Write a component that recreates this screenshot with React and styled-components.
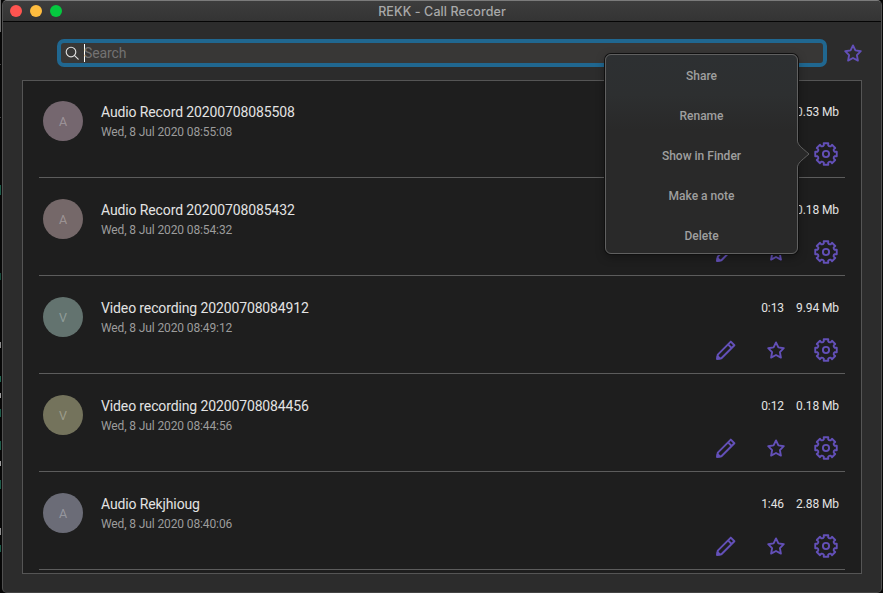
import React from "react";
import styled, { createGlobalStyle } from "styled-components";

const PURPLE = "#6350b8";

const GlobalStyle = createGlobalStyle`
  * { box-sizing: border-box; }
  html, body { margin: 0; height: 100%; background: #050505; overflow: hidden; }
  body { font-family: Roboto, "Liberation Sans", sans-serif; }
`;

// Slivers of another window's text that show past the left edge: [top, bottom, colour].
const slivers = [
  [0, 32, "#6f6f6f"],
  [64, 65, "#444"],
  [117, 118, "#444"],
  [185, 195, "#1c5c49"],
  [273, 280, "#154a3a"],
  [342, 348, "#8f8f8f"],
  [376, 382, "#1f6650"],
  [393, 398, "#a0a0a0"],
  [409, 417, "#1c5c49"],
  [441, 450, "#1c5c49"],
  [461, 466, "#a0a0a0"],
  [480, 489, "#1c5c49"],
  [528, 535, "#8f8f8f"],
  [545, 552, "#1c5c49"],
];

const sliverStops = slivers
  .map(([top, bottom, color]) => `transparent ${top}px, ${color} ${top}px ${bottom}px, transparent ${bottom}px`)
  .join(", ");

const Desktop = styled.div`
  width: 883px;
  height: 593px;
  padding: 0 1px 0 2px;
  background: linear-gradient(${sliverStops}) 0 0 / 1px 100% no-repeat, #060606;
`;

const Window = styled.main`
  display: flex;
  flex-direction: column;
  width: 880px;
  height: 593px;
  border: 1px solid #505050;
  border-top-color: #7b7b7b;
  border-bottom-color: #444;
  border-radius: 5px;
  background: #2c2c2c;
  box-shadow: 0 0 0 1px #080808;
`;

const TitleBar = styled.header`
  display: grid;
  grid-template-columns: 100px 1fr 100px;
  align-items: center;
  flex: none;
  height: 21px;
  border-bottom: 1px solid #050505;
  border-radius: 4px 4px 0 0;
  background: linear-gradient(#3d3d3d, #343434);
`;

const Lights = styled.div`
  display: flex;
  gap: 8px;
  padding-left: 7px;
`;

const Light = styled.span`
  width: 12px;
  height: 12px;
  border-radius: 50%;
  background: ${(p) => p.$color};
`;

const Title = styled.h1`
  margin: 0;
  padding-top: 2px;
  color: #a9a9a9;
  font: 500 12.5px/18px Inter, sans-serif;
  letter-spacing: 0.1px;
  text-align: center;
`;

const Toolbar = styled.div`
  display: flex;
  align-items: center;
  flex: none;
  height: 58px;
  padding: 4px 14px 0 54px;
`;

const SearchField = styled.label`
  display: flex;
  align-items: center;
  flex: none;
  width: 770px;
  height: 28px;
  margin-right: 15px;
  padding-left: 4px;
  border: 4px solid #206790;
  border-radius: 7px;
  background: #383736;
`;

const Caret = styled.span`
  width: 1px;
  height: 18px;
  margin-left: 5px;
  background: #fff;
`;

const Placeholder = styled.span`
  margin-left: -1px;
  color: #737272;
  font-size: 14px;
  letter-spacing: -0.1px;
  line-height: 20px;
`;

const List = styled.section`
  width: 840px;
  height: 494px;
  margin-left: 19px;
  padding: 0 16px;
  border: 1px solid #555;
  background: #1e1e1e;
`;

const Row = styled.article`
  display: grid;
  grid-template-columns: 58px 1fr auto;
  height: ${(p) => (p.$first ? 97 : 98)}px;
  padding: ${(p) => (p.$first ? 20 : 21)}px 7px 0 4px;
  border-bottom: 1px solid #5c5c5c;
`;

const Avatar = styled.div`
  width: 40px;
  height: 40px;
  border-radius: 50%;
  background: ${(p) => p.$color};
  color: rgba(255, 255, 255, 0.3);
  font-size: 12.5px;
  line-height: 42px;
  text-align: center;
`;

const Name = styled.h2`
  margin: 1px 0 0;
  color: #e3e3e3;
  font-size: 14px;
  font-weight: 400;
  letter-spacing: -0.125px;
  line-height: 20px;
`;

const Stamp = styled.p`
  margin: 0;
  color: #9c9c9c;
  font-size: 12px;
  letter-spacing: -0.12px;
  line-height: 20px;
`;

const Side = styled.div`
  display: flex;
  flex-direction: column;
  align-items: flex-end;
`;

const Facts = styled.div`
  display: flex;
  gap: 12px;
  margin: 1px -1px 0 0;
  color: #e3e3e3;
  font-size: 12px;
  letter-spacing: -0.08px;
  line-height: 20px;
`;

const Actions = styled.div`
  display: flex;
  align-items: center;
  gap: 28px;
  height: 24px;
  margin-top: 20px;
`;

const IconButton = styled.button`
  display: flex;
  padding: 0;
  border: 0;
  background: none;
  color: ${PURPLE};
`;

const ToolbarButton = styled(IconButton)`
  margin-bottom: 1px;
`;

const StarButton = styled(IconButton)`
  margin-right: -1px;
`;

const Menu = styled.nav`
  position: absolute;
  top: 54px;
  left: 605px;
  width: 193px;
  height: 200px;
  padding-top: 1px;
  border: 1px solid #606060;
  border-radius: 6px;
  background: linear-gradient(#2d3032 0, #2d2f30 40px, #292929 75px, #292929);
  box-shadow: 0 0 0 1px #101010, 0 3px 10px rgba(0, 0, 0, 0.35);
`;

const MenuItem = styled.div`
  height: 40px;
  color: #9f9f9f;
  font-size: 12px;
  font-weight: 500;
  line-height: 40px;
  text-align: center;
`;

const Pointer = styled.svg`
  position: absolute;
  top: 85px;
  left: 190px;
  width: 14px;
  height: 28px;
`;

const point = (angle, radius) => {
  const a = (angle * Math.PI) / 180;
  return `${(12 + radius * Math.sin(a)).toFixed(2)} ${(12 - radius * Math.cos(a)).toFixed(2)}`;
};

const gearPath =
  Array.from({ length: 8 }, (_, i) => {
    const a = i * 45;
    return `${i ? "L" : "M"}${point(a - 12, 11)}L${point(a + 12, 11)}L${point(a + 14, 9)}Q${point(a + 22.5, 7.9)} ${point(a + 31, 9)}`;
  }).join("") + "Z";

const Gear = () => (
  <svg width="24" height="24" viewBox="0 0 24 24" fill="none" stroke="currentColor" strokeWidth="1.9" strokeLinejoin="round">
    <path d={gearPath} />
    <circle cx="12" cy="12" r="3.1" />
  </svg>
);

const Star = () => (
  <svg width="22" height="22" viewBox="0 0 22 22" fill="none" stroke="currentColor" strokeWidth="1.9" strokeLinejoin="round">
    <path d="M11 3.4 13.4 8.4 18.8 9.2 14.9 13.1 15.9 18.6 11 16 6.1 18.6 7.1 13.1 3.2 9.2 8.6 8.4Z" />
  </svg>
);

const Pencil = () => (
  <svg width="22" height="22" viewBox="0 0 22 22" fill="none" stroke="currentColor" strokeWidth="1.95" strokeLinejoin="round">
    <path d="M2.2 19.9 2.8 15.6 15.8 2.6 19.4 6.2 6.4 19.2ZM13 5.4 16.6 9" />
    <path d="M2.2 19.9 2.6 17.2 4.9 19.5Z" fill="currentColor" />
  </svg>
);

const Magnifier = () => (
  <svg width="14" height="14" viewBox="0 0 14 14" fill="none" stroke="#dedede" strokeWidth="1.15" strokeLinecap="round">
    <circle cx="6" cy="6" r="4.8" />
    <path d="m9.6 9.6 3.6 3.6" />
  </svg>
);

const recordings = [
  { name: "Audio Record 20200708085508", stamp: "Wed, 8 Jul 2020 08:55:08", color: "#75676f", time: "", size: "0.53 Mb" },
  { name: "Audio Record 20200708085432", stamp: "Wed, 8 Jul 2020 08:54:32", color: "#756869", time: "", size: "0.18 Mb" },
  { name: "Video recording 20200708084912", stamp: "Wed, 8 Jul 2020 08:49:12", color: "#63736f", time: "0:13", size: "9.94 Mb" },
  { name: "Video recording 20200708084456", stamp: "Wed, 8 Jul 2020 08:44:56", color: "#74735c", time: "0:12", size: "0.18 Mb" },
  { name: "Audio Rekjhioug", stamp: "Wed, 8 Jul 2020 08:40:06", color: "#6b6c77", time: "1:46", size: "2.88 Mb" },
];

const menuItems = ["Share", "Rename", "Show in Finder", "Make a note", "Delete"];

export default function App() {
  return (
    <Desktop>
      <GlobalStyle />
      <Window>
        <TitleBar>
          <Lights>
            <Light $color="#ff5450" />
            <Light $color="#ffbd3f" />
            <Light $color="#05c93f" />
          </Lights>
          <Title>REKK - Call Recorder</Title>
        </TitleBar>
        <Toolbar>
          <SearchField>
            <Magnifier />
            <Caret />
            <Placeholder>Search</Placeholder>
          </SearchField>
          <ToolbarButton aria-label="Favourites"><Star /></ToolbarButton>
        </Toolbar>
        <List>
          {recordings.map((r, i) => (
            <Row key={r.name} $first={i === 0}>
              <Avatar $color={r.color}>{r.name[0]}</Avatar>
              <div>
                <Name>{r.name}</Name>
                <Stamp>{r.stamp}</Stamp>
              </div>
              <Side>
                <Facts>
                  {r.time && <span>{r.time}</span>}
                  <span>{r.size}</span>
                </Facts>
                <Actions>
                  {i > 0 && (
                    <>
                      <IconButton aria-label="Edit"><Pencil /></IconButton>
                      <StarButton aria-label="Star"><Star /></StarButton>
                    </>
                  )}
                  <IconButton aria-label="Settings"><Gear /></IconButton>
                </Actions>
              </Side>
            </Row>
          ))}
        </List>
      </Window>
      <Menu>
        {menuItems.map((item) => <MenuItem key={item}>{item}</MenuItem>)}
        <Pointer viewBox="0 0 14 28">
          <path d="M0 0H1.5C1.5 5 5 7 13 14C5 21 1.5 23 1.5 28H0Z" fill="#292929" />
          <path d="M1.5 0C1.5 5 5 7 13 14C5 21 1.5 23 1.5 28" fill="none" stroke="#606060" />
        </Pointer>
      </Menu>
    </Desktop>
  );
}
